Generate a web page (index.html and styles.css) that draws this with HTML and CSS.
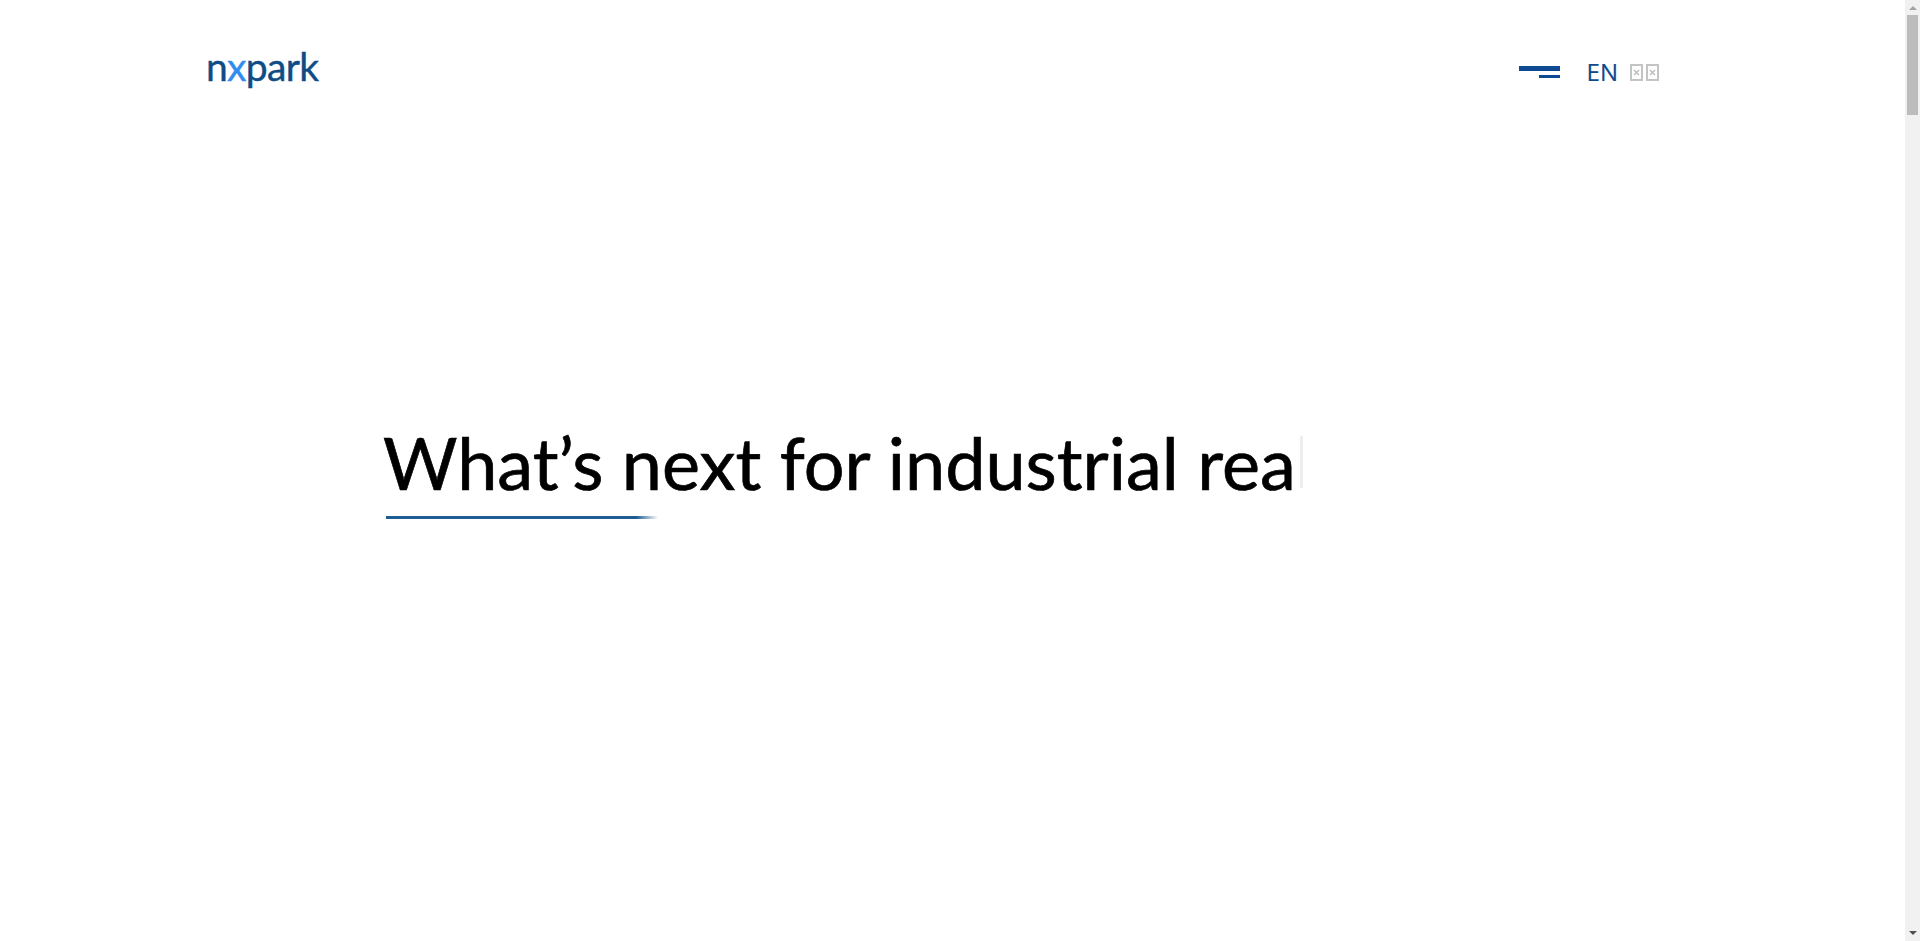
FILE: index.html
```html
<!DOCTYPE html>
<html lang="en">
<head>
    <meta charset="UTF-8">
    <meta name="viewport" content="width=device-width, initial-scale=1.0">
    <title>nxpark</title>
    <link rel="stylesheet" href="styles.css">
</head>
<body>
    <div class="page">
        <header class="topbar">
            <a class="logo" href="#">n<span class="logo-x">x</span>park</a>
            <div class="topbar-right">
                <button class="menu-btn" aria-label="Menu">
                    <span class="menu-line-long"></span>
                    <span class="menu-line-short"></span>
                </button>
                <div class="lang">
                    <span class="lang-label">EN</span>
                    <span class="flag-box">
                        <svg viewBox="0 0 13 17" width="13" height="17">
                            <rect x="1" y="1" width="11" height="15" fill="#fff" stroke="#c4c4c4" stroke-width="2"/>
                            <path d="M4 6l5 5M9 6l-5 5" stroke="#bbb" stroke-width="1.4" fill="none"/>
                        </svg>
                        <svg viewBox="0 0 13 17" width="13" height="17">
                            <rect x="1" y="1" width="11" height="15" fill="#fff" stroke="#c4c4c4" stroke-width="2"/>
                            <path d="M4 6l5 5M9 6l-5 5" stroke="#bbb" stroke-width="1.4" fill="none"/>
                        </svg>
                    </span>
                </div>
            </div>
        </header>

        <section class="hero">
            <div class="headline">
                <h1>What’s next for industrial rea</h1>
                <span class="cursor"></span>
            </div>
            <div class="underline"></div>
        </section>
    </div>

    <!-- browser scrollbar -->
    <div class="scrollbar">
        <span class="arrow-up"></span>
        <div class="thumb"></div>
        <span class="arrow-down"></span>
    </div>
</body>
</html>
```

FILE: styles.css
```css
html, body {
    margin: 0;
    padding: 0;
    height: 100%;
    overflow: hidden;
}
body {
    display: flex;
    background-color: white;
    font-family: "Open Sans", sans-serif;
}
.page {
    flex-grow: 1;
    display: flex;
    flex-direction: column;
}
.topbar {
    display: flex;
    justify-content: space-between;
    align-items: flex-start;
    padding: 40px 246px 0 206px;
}
.logo {
    margin-top: 2px;
    font-family: "Lato", sans-serif;
    font-size: 39px;
    line-height: 48px;
    letter-spacing: -0.7px;
    color: #0f4c86;
    text-decoration: none;
    -webkit-text-stroke: 0.4px #0f4c86;
}
.logo-x {
    color: #2f8cf0;
    -webkit-text-stroke: 0.4px #2f8cf0;
}
.topbar-right {
    display: flex;
    align-items: center;
    gap: 27px;
    padding-top: 16px;
}
.menu-btn {
    display: flex;
    flex-direction: column;
    align-items: flex-end;
    gap: 4px;
    width: 41px;
    padding: 0;
    border: none;
    background: none;
}
.menu-line-long {
    width: 41px;
    height: 5px;
    background-color: #0d4a92;
}
.menu-line-short {
    width: 21px;
    height: 3px;
    background-color: #0d4a92;
}
.lang {
    display: flex;
    align-items: center;
    gap: 12px;
}
.lang-label {
    font-size: 24px;
    line-height: 32px;
    color: #0d4a8c;
    -webkit-text-stroke: 0.2px #0d4a8c;
}
.flag-box {
    display: flex;
    gap: 3px;
}
.hero {
    padding: 327px 0 0 383px;
}
.headline {
    display: flex;
    align-items: center;
    gap: 4px;
}
h1 {
    margin: 0;
    font-family: "Lato", sans-serif;
    font-size: 72px;
    line-height: 90px;
    font-weight: 400;
    color: black;
    white-space: nowrap;
    -webkit-text-stroke: 0.7px black;
}
.cursor {
    width: 3px;
    height: 52px;
    background-color: #eeeeee;
}
.underline {
    width: 272px;
    height: 3px;
    margin: 9px 0 0 3px;
    background: linear-gradient(to right, #1f5c94 92%, #ffffff);
}
.scrollbar {
    flex: 0 0 15px;
    display: flex;
    flex-direction: column;
    align-items: center;
    background-color: #f1f1f1;
}
.arrow-up {
    margin-top: 6px;
    border-left: 4px solid transparent;
    border-right: 4px solid transparent;
    border-bottom: 4px solid #a3a3a3;
}
.thumb {
    width: 11px;
    height: 100px;
    margin-top: 5px;
    background-color: #bcbcbc;
}
.arrow-down {
    margin-top: auto;
    margin-bottom: 6px;
    border-left: 4px solid transparent;
    border-right: 4px solid transparent;
    border-top: 4px solid #505050;
}
```
